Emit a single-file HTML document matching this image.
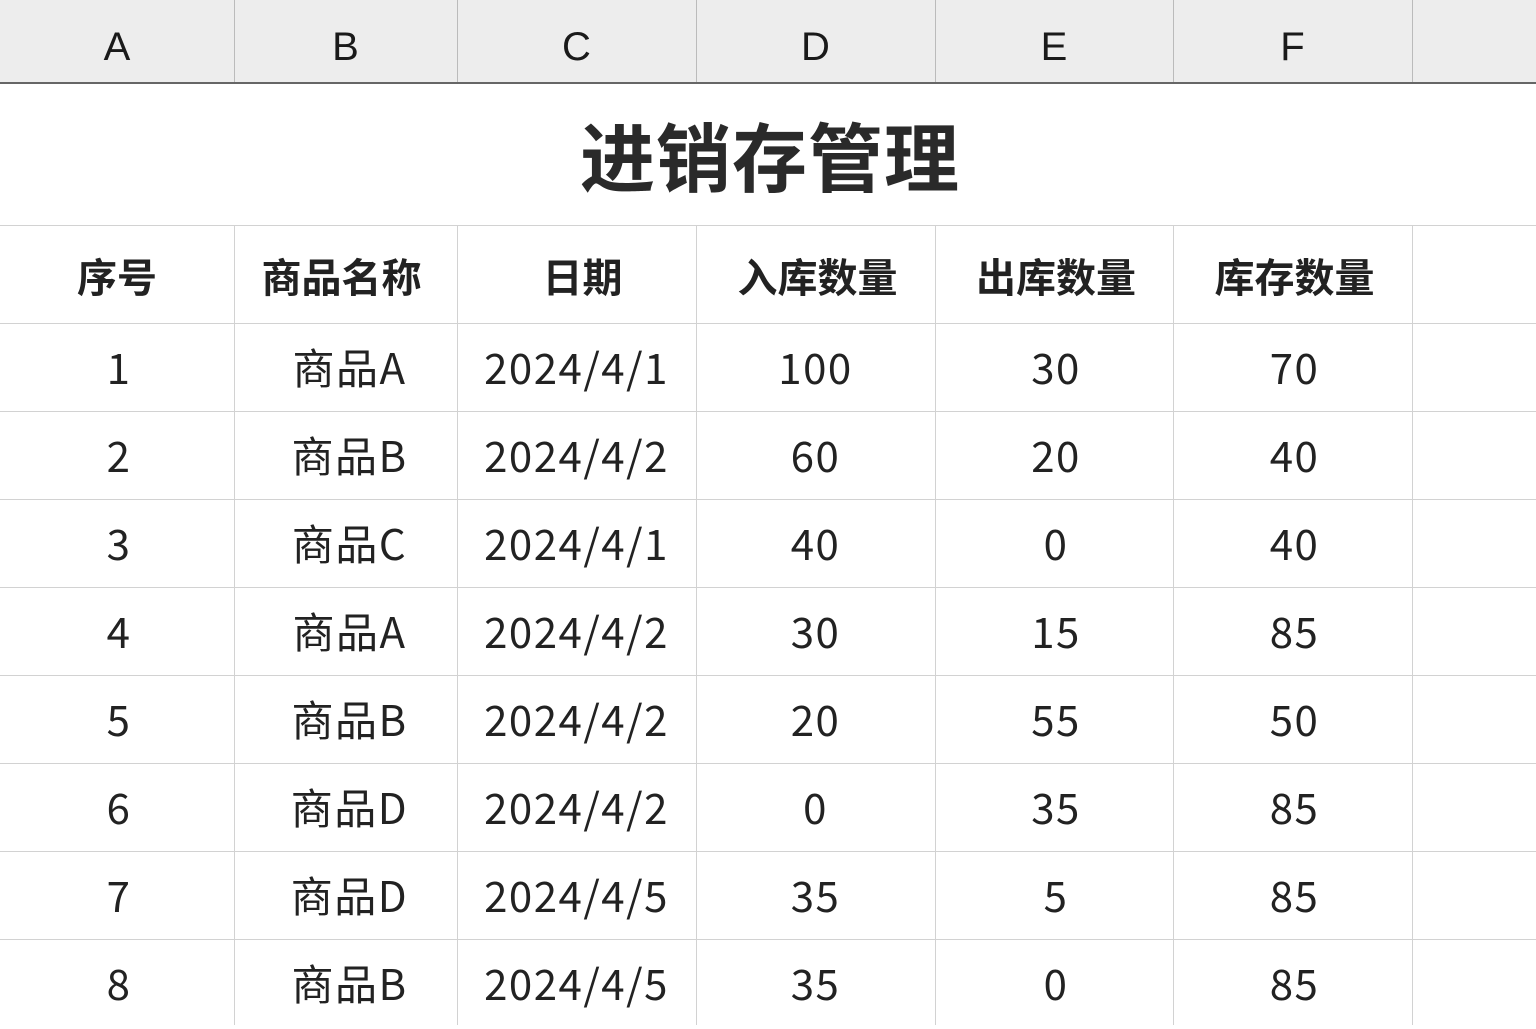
<!DOCTYPE html>
<html><head><meta charset="utf-8"><style>
body{margin:0;width:1536px;height:1024px;overflow:hidden;background:#fff;font-family:"Noto Sans CJK SC","Liberation Sans",sans-serif;color:#222;position:relative}
.hd{position:absolute;left:0;top:0;width:1536px;height:82px;background:#ededed;border-bottom:2px solid #666}
.c{position:absolute;display:flex;align-items:center;justify-content:center;line-height:1}
.v{position:absolute;width:1px;background:#d2d2d2}
.h{position:absolute;left:0;width:1536px;height:1px;background:#d2d2d2}
</style></head><body>
<div class="hd"></div>
<div id="g"></div>
<script>
const xs=[0,234,457,696,935,1173,1412,1536];
let s='';
const L=['A','B','C','D','E','F'];
for(let i=1;i<7;i++){s+=`<div class="v" style="left:${xs[i]}px;top:0;height:82px;background:#bbb"></div>`;}
for(let i=0;i<6;i++)s+=`<div class="c" style="left:${xs[i]}px;top:0;width:${xs[i+1]-xs[i]}px;height:94px;font-size:40px;color:#1a1a1a;font-family:'Liberation Sans',sans-serif">${L[i]}</div>`;
s+=`<div class="c" style="left:0;top:82px;width:1540px;height:142px;font-size:75px;font-weight:bold;color:#2a2a2a;letter-spacing:1px">进销存管理</div>`;
s+=`<div class="h" style="top:225px"></div>`;
const ys=[225,323,411,499,587,675,763,851,939,1027];
for(let r=1;r<ys.length-1;r++)s+=`<div class="h" style="top:${ys[r]}px"></div>`;
for(let i=1;i<7;i++)s+=`<div class="v" style="left:${xs[i]}px;top:225px;height:800px"></div>`;
const hdr=['序号','商品名称','日期','入库数量','出库数量','库存数量'];
const off=[0,-4,6,2,2,2];
for(let i=0;i<6;i++)s+=`<div class="c" style="left:${xs[i]+off[i]}px;top:225px;width:${xs[i+1]-xs[i]}px;height:100px;font-size:40px;font-weight:bold">${hdr[i]}</div>`;
const rows=[[1,'商品A','2024/4/1',100,30,70],[2,'商品B','2024/4/2',60,20,40],[3,'商品C','2024/4/1',40,0,40],[4,'商品A','2024/4/2',30,15,85],[5,'商品B','2024/4/2',20,55,50],[6,'商品D','2024/4/2',0,35,85],[7,'商品D','2024/4/5',35,5,85],[8,'商品B','2024/4/5',35,0,85]];
const off2=[2,4,0,0,2,2];
rows.forEach((r,ri)=>{for(let i=0;i<6;i++)s+=`<div class="c" style="left:${xs[i]+off2[i]}px;top:${ys[ri+1]-2}px;width:${xs[i+1]-xs[i]}px;height:92px;font-size:42px;letter-spacing:1.5px">${r[i]}</div>`;});
document.getElementById('g').innerHTML=s;
</script>
</body></html>
